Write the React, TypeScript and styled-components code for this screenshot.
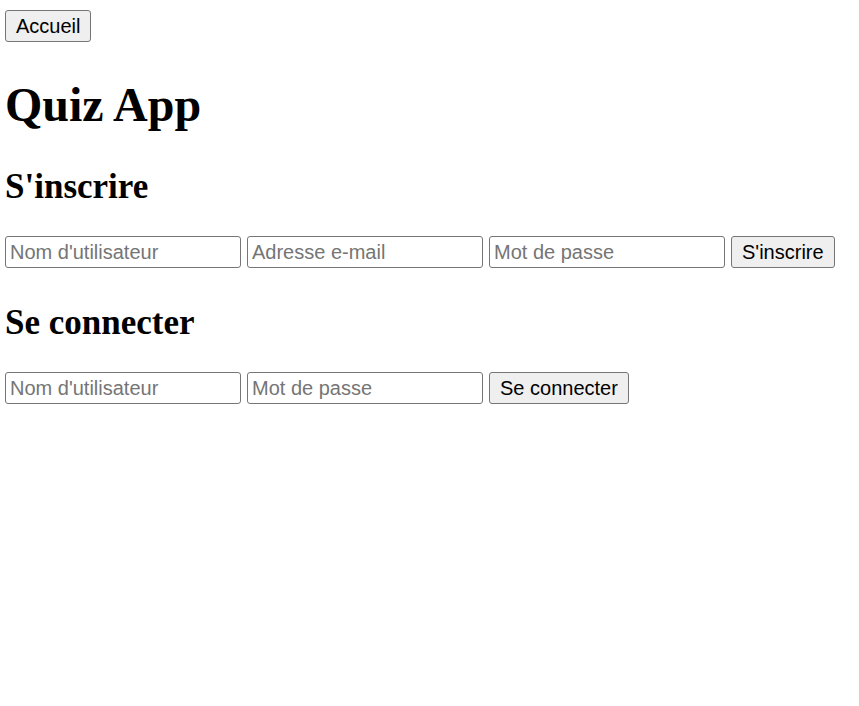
import React from "react";
import styled, { createGlobalStyle } from "styled-components";

const GlobalStyle = createGlobalStyle`
  html, body { margin: 0; padding: 0; background: #ffffff; }
  body { font-family: "Liberation Serif", "Times New Roman", serif; color: #000; }
`;

const Page = styled.div`
  padding: 10px 5px;
`;

const Button = styled.button`
  box-sizing: border-box;
  height: 32px;
  padding: 0 10px;
  font-family: "Liberation Sans", Arial, sans-serif;
  font-size: 20px;
  color: #000;
  background: #efefef;
  border: 1px solid #767676;
  border-radius: 3px;
  cursor: pointer;
  flex: none;
`;

const Title = styled.h1`
  font-size: 48px;
  font-weight: bold;
  line-height: 55px;
  margin: 35px 0 0;
`;

const Heading = styled.h2`
  font-size: 35px;
  font-weight: bold;
  line-height: 41px;
  margin: 34px 0 27px;
`;

const Row = styled.form`
  display: flex;
  gap: 6px;
  align-items: center;
  padding-top: 2px;
  margin: 0;
`;

const Input = styled.input`
  box-sizing: border-box;
  width: 236px;
  height: 32px;
  padding: 1px 4px;
  font-family: "Liberation Sans", Arial, sans-serif;
  font-size: 20px;
  color: #000;
  background: #fff;
  border: 1px solid #767676;
  border-radius: 3px;
  &::placeholder { color: #757575; }
`;

export default function App() {
  return (
    <Page>
      <GlobalStyle />
      <Button type="button">Accueil</Button>
      <Title>Quiz App</Title>
      <Heading>S'inscrire</Heading>
      <Row onSubmit={(e) => e.preventDefault()}>
        <Input type="text" placeholder="Nom d'utilisateur" />
        <Input type="email" placeholder="Adresse e-mail" />
        <Input type="password" placeholder="Mot de passe" />
        <Button type="submit">S'inscrire</Button>
      </Row>
      <Heading>Se connecter</Heading>
      <Row onSubmit={(e) => e.preventDefault()}>
        <Input type="text" placeholder="Nom d'utilisateur" />
        <Input type="password" placeholder="Mot de passe" />
        <Button type="submit">Se connecter</Button>
      </Row>
    </Page>
  );
}
